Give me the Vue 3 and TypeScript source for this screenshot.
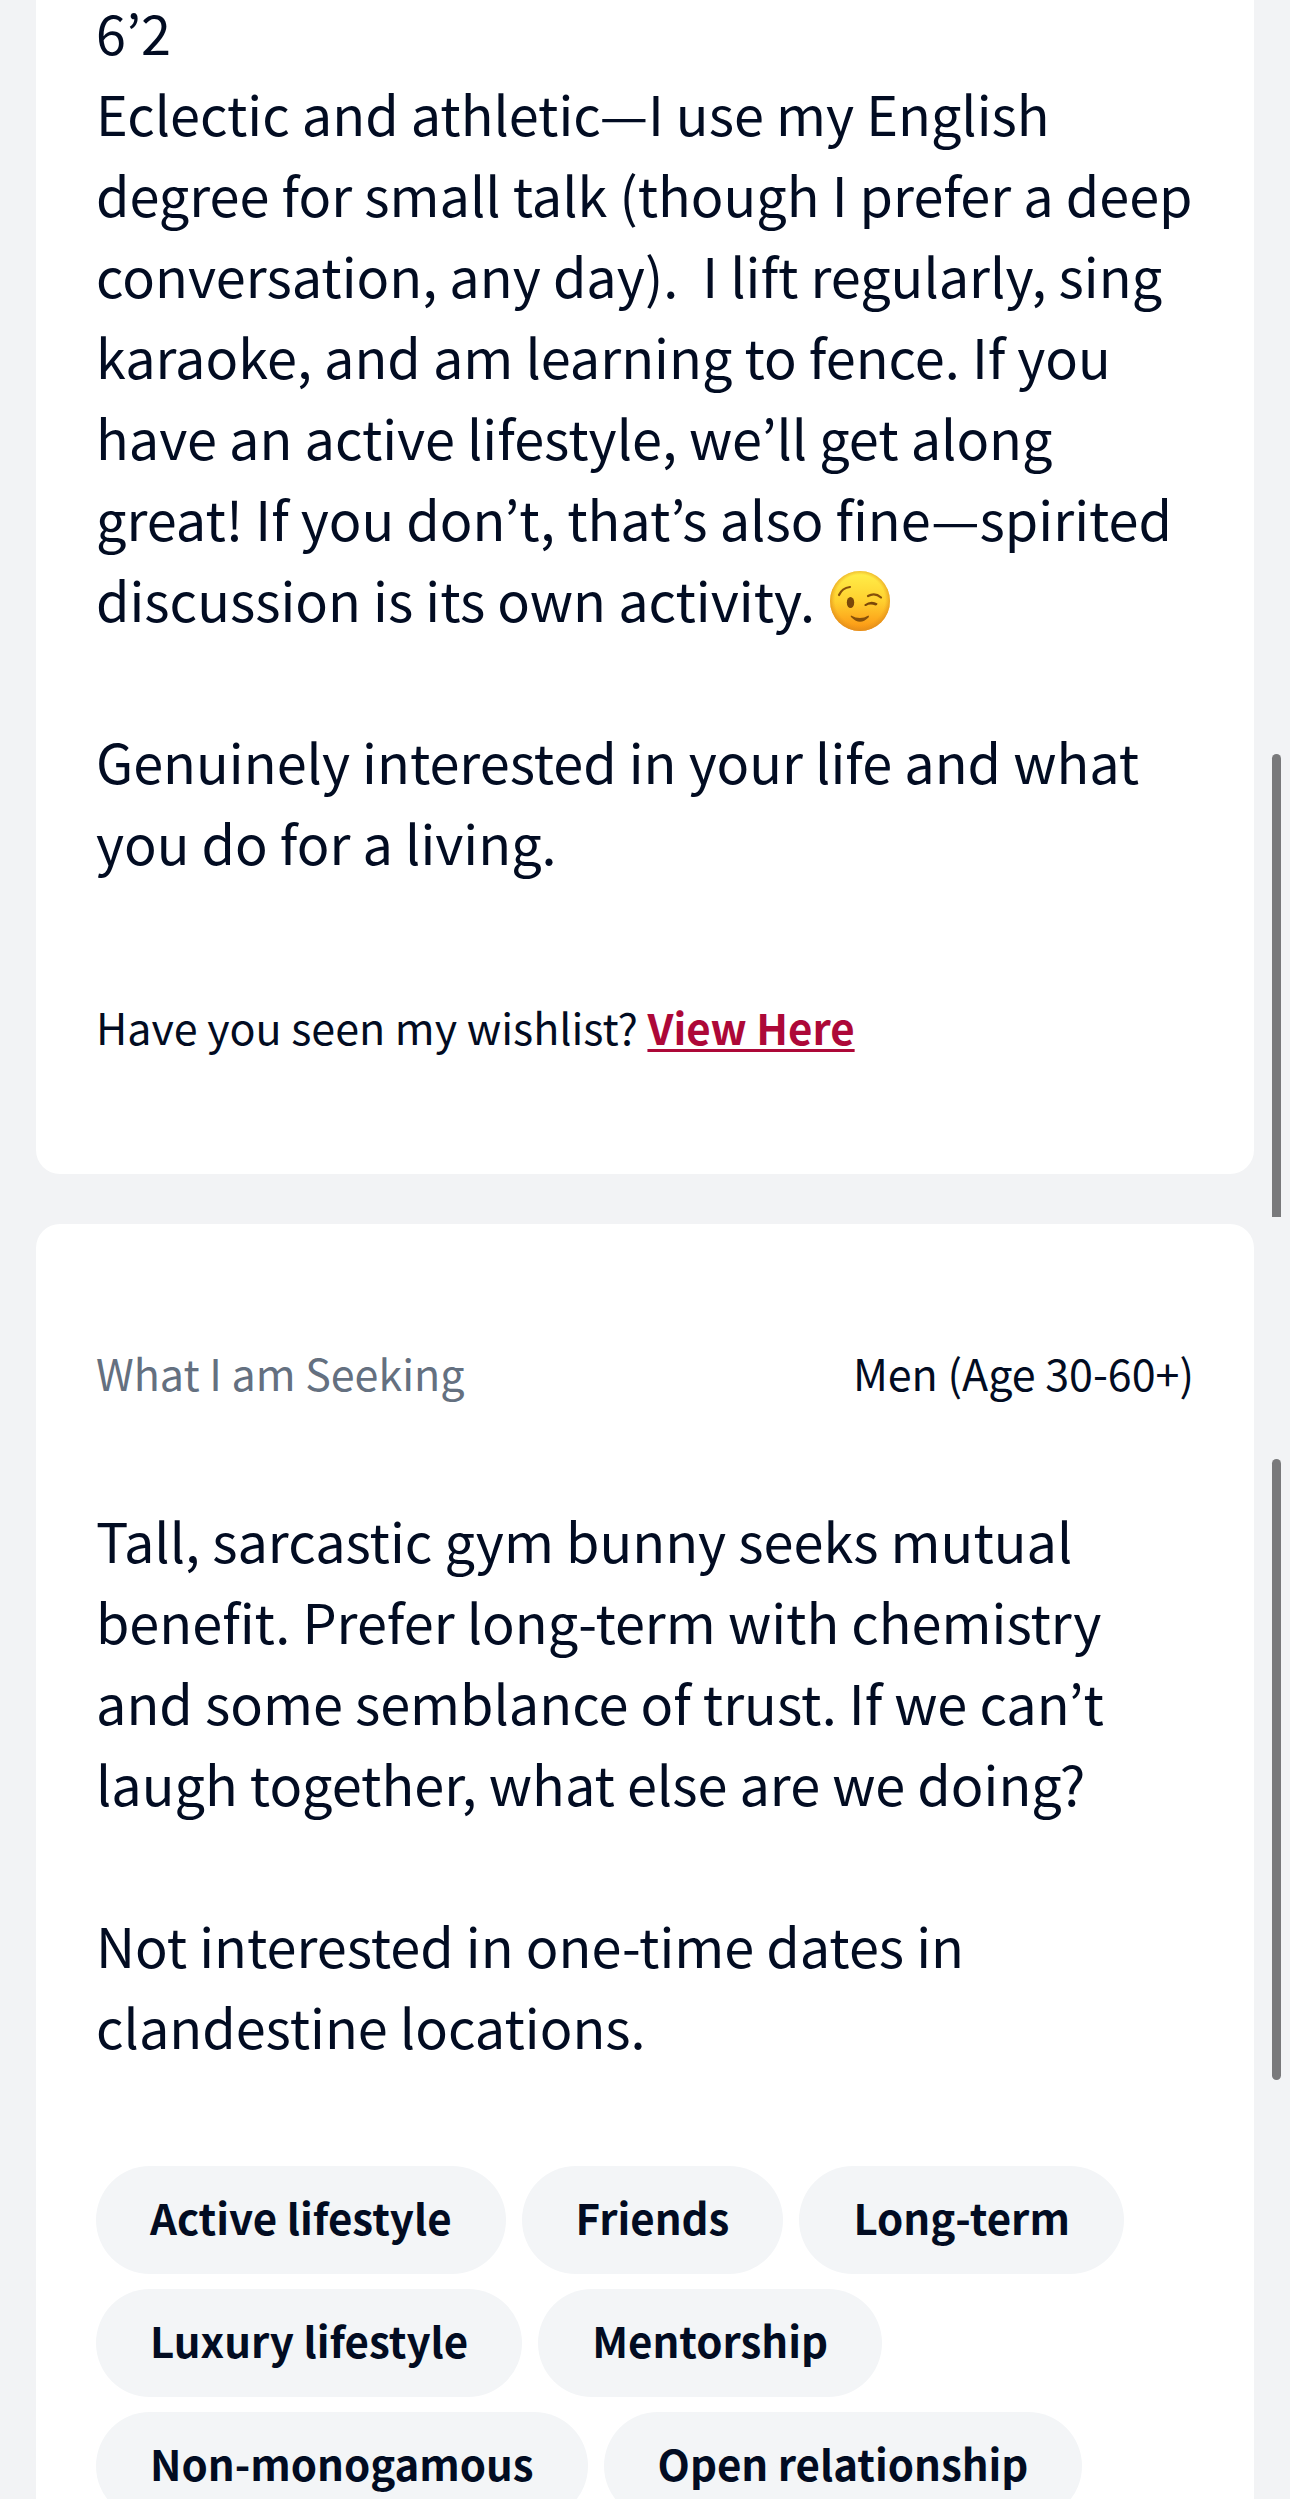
<script setup lang="ts">
const height = '6’2'
const aboutIntro =
  'Eclectic and athletic—I use my English degree for small talk (though I prefer a deep conversation, any day). \u00a0I lift regularly, sing karaoke, and am learning to fence. If you have an active lifestyle, we’ll get along great! If you don’t, that’s also fine—spirited discussion is its own activity.'
const aboutClosing = 'Genuinely interested in your life and what you do for a living.'

const seeking: string[] = [
  'Tall, sarcastic gym bunny seeks mutual benefit. Prefer long-term with chemistry and some semblance of trust. If we can’t laugh together, what else are we doing?',
  'Not interested in one-time dates in clandestine locations.',
]

const tags: string[] = [
  'Active lifestyle',
  'Friends',
  'Long-term',
  'Luxury lifestyle',
  'Mentorship',
  'Non-monogamous',
  'Open relationship',
]
</script>

<template>
  <main class="page">
    <section class="card about">
      <div class="prose">
        <p>
          {{ height }}<br />{{ aboutIntro }}
          <svg class="emoji" viewBox="0 0 60 60" role="img" aria-label="Winking face">
            <defs>
              <linearGradient id="face" x1="0" y1="0" x2="0" y2="1">
                <stop offset="0" stop-color="#fff04a" />
                <stop offset="0.5" stop-color="#ffd02f" />
                <stop offset="1" stop-color="#fb9212" />
              </linearGradient>
              <radialGradient id="rim" cx="0.5" cy="0.48" r="0.52">
                <stop offset="0.8" stop-color="#e89a1c" stop-opacity="0" />
                <stop offset="1" stop-color="#df8d1c" stop-opacity="0.85" />
              </radialGradient>
            </defs>
            <circle cx="30" cy="30" r="30" fill="url(#face)" />
            <circle cx="30" cy="30" r="30" fill="url(#rim)" />
            <ellipse cx="20.500" cy="31.500" rx="3.700" ry="5.600" fill="#7a4709" />
            <path d="M9 24Q12 17 20 16" fill="none" stroke="#86500a" stroke-width="2.200" stroke-linecap="round" />
            <path d="M38 25Q45 21 51 26.500" fill="none" stroke="#86500a" stroke-width="2.200" stroke-linecap="round" />
            <path d="M34.500 33.500Q41 28.500 47.500 32.500Q47.500 34.500 45.500 34.500Q40 32.500 36 35Q34 35.500 34.500 33.500Z" fill="#7a4709" />
            <path d="M21 44.500Q30 49.500 38.500 44.500Q39.500 45 38.500 46.500Q30 55 21.500 46.500Q20 45 21 44.500Z" fill="#86500a" />
          </svg>
        </p>
        <p>{{ aboutClosing }}</p>
      </div>
      <p class="wishlist">Have you seen my wishlist? <a href="#wishlist">View Here</a></p>
    </section>

    <section class="card seeking">
      <header class="heading">
        <h2>What I am Seeking</h2>
        <span>Men (Age 30-60+)</span>
      </header>
      <div class="prose">
        <p v-for="text in seeking" :key="text">{{ text }}</p>
      </div>
      <ul class="tags">
        <li v-for="tag in tags" :key="tag">{{ tag }}</li>
      </ul>
    </section>

    <div class="thumb outer" aria-hidden="true"></div>
    <div class="thumb inner" aria-hidden="true"></div>
  </main>
</template>

<style>
body {
  margin: 0;
  background: #f2f3f5;
}
</style>

<style scoped>
.page {
  position: relative;
  box-sizing: border-box;
  height: 100vh;
  overflow: hidden;
  padding: 0 36px;
  background: #f2f3f5;
  color: #020c22;
  font-family: "Noto Sans CJK KR", "Noto Sans", sans-serif;
  font-size: 43px;
  line-height: 60px;
}

.card {
  padding: 118px 60px;
  border-radius: 24px;
  background: #fff;
}

.about {
  margin-top: -127px;
}

.seeking {
  margin-top: 50px;
}

p,
h2 {
  margin: 0;
}

.prose {
  font-size: 54px;
  line-height: 81px;
}

.prose p + p {
  margin-top: 81px;
}

.emoji {
  width: 60px;
  height: 60px;
  margin-left: 3px;
  vertical-align: -9px;
}

.wishlist {
  margin-top: 114px;
}

.wishlist a {
  color: #ad0838;
  font-size: 42px;
  font-weight: 700;
  line-height: 1;
  text-decoration: underline;
  text-decoration-thickness: 3px;
  text-underline-offset: 4px;
}

.heading {
  display: flex;
  justify-content: space-between;
  margin-bottom: 97px;
}

.heading h2 {
  color: #647080;
  font-size: inherit;
  font-weight: 400;
}

.tags {
  display: flex;
  flex-wrap: wrap;
  gap: 15px 16px;
  margin: 100px 0 0;
  padding: 0;
  list-style: none;
}

.tags li {
  padding: 21px 54px 27px;
  border-radius: 54px;
  background: #f3f5f7;
  font-size: 42px;
  font-weight: 700;
}

.thumb {
  position: absolute;
  right: 9px;
  width: 9px;
  background: #79797b;
}

.outer {
  top: 754px;
  height: 463px;
  border-radius: 5px 5px 0 0;
}

.inner {
  top: 1459px;
  height: 621px;
  border-radius: 5px;
}
</style>
